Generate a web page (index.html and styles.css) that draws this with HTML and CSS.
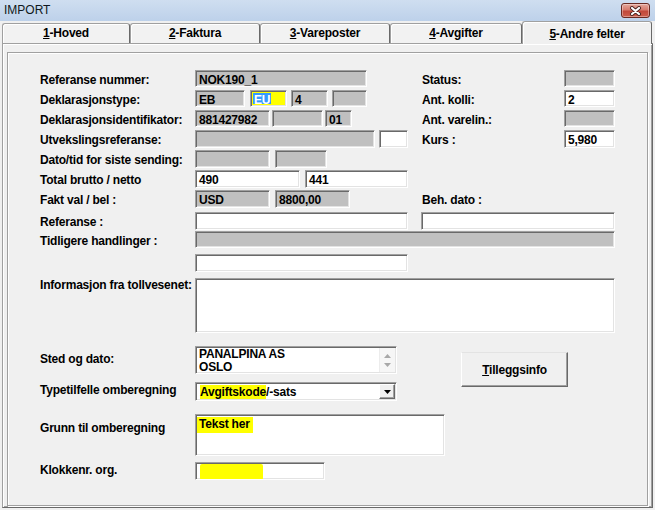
FILE: index.html
```html
<!DOCTYPE html>
<html>
<head>
<meta charset="utf-8">
<title>IMPORT</title>
<link rel="stylesheet" href="styles.css">
</head>
<body>
<div class="window">
  <div class="titlebar">
    <span class="title">IMPORT</span>
    <div class="close">
      <svg width="13" height="10" viewBox="0 0 13 10">
        <path d="M3 2 L10 8 M10 2 L3 8" stroke="#4a2420" stroke-width="4" stroke-linecap="round" fill="none"/>
        <path d="M3 2 L10 8 M10 2 L3 8" stroke="#ffffff" stroke-width="2.2" stroke-linecap="round" fill="none"/>
      </svg>
    </div>
  </div>

  <div class="tabs">
    <div class="tab t1"><u>1</u>-Hoved</div>
    <div class="tab"><u>2</u>-Faktura</div>
    <div class="tab"><u>3</u>-Vareposter</div>
    <div class="tab t4"><u>4</u>-Avgifter</div>
    <div class="tab active"><u>5</u>-Andre felter</div>
  </div>

  <div class="panel">
    <div class="group">
      <div class="form">
        <!-- row 1 -->
        <div class="lbl c1">Referanse nummer:</div>
        <div class="cell"><div class="f g h17 w172">NOK190_1</div></div>
        <div class="lbl c3">Status:</div>
        <div class="f g h17 w51 c4"></div>

        <!-- row 2 -->
        <div class="lbl c1">Deklarasjonstype:</div>
        <div class="cell">
          <div class="f g h17 w50">EB</div>
          <div class="f y h17 w37 ml5"><span class="sel">EU</span></div>
          <div class="f g h17 w37 ml4">4</div>
          <div class="f g h17 w35 ml4"></div>
        </div>
        <div class="lbl c3">Ant. kolli:</div>
        <div class="f h17 w51 c4">2</div>

        <!-- row 3 -->
        <div class="lbl c1">Deklarasjonsidentifikator:</div>
        <div class="cell">
          <div class="f g h17 w75">881427982</div>
          <div class="f g h17 w51 ml2"></div>
          <div class="f g h17 w27 ml2">01</div>
        </div>
        <div class="lbl c3">Ant. varelin.:</div>
        <div class="f g h17 w51 c4"></div>

        <!-- row 4 -->
        <div class="lbl c1">Utvekslingsreferanse:</div>
        <div class="cell">
          <div class="f g w180"></div>
          <div class="f w29 ml4"></div>
        </div>
        <div class="lbl c3">Kurs :</div>
        <div class="f w51 c4">5,980</div>

        <!-- row 5 -->
        <div class="lbl c1">Dato/tid for siste sending:</div>
        <div class="cell">
          <div class="f g w75"></div>
          <div class="f g w52 ml5"></div>
        </div>

        <!-- row 6 -->
        <div class="lbl c1">Total brutto / netto</div>
        <div class="cell">
          <div class="f w105">490</div>
          <div class="f w103 ml5">441</div>
        </div>

        <!-- row 7 -->
        <div class="lbl c1">Fakt val / bel :</div>
        <div class="cell">
          <div class="f g w75">USD</div>
          <div class="f g w75 ml5">8800,00</div>
        </div>
        <div class="lbl c3">Beh. dato :</div>

        <!-- row 8 -->
        <div class="lbl c1">Referanse :</div>
        <div class="cell"><div class="f w213"></div></div>
        <div class="f w194 span34 shiftl"></div>

        <!-- row 9 -->
        <div class="lbl c1">Tidligere handlinger :</div>
        <div class="f g h17 w420 span24"></div>

        <!-- row 10 -->
        <div class="f w213 c2"></div>

        <!-- row 11 -->
        <div class="lbl c1 lbl-top">Informasjon fra tollvesenet:</div>
        <div class="f w420 h55 span24"></div>

        <!-- row 12 -->
        <div class="lbl c1 mt3">Sted og dato:</div>
        <div class="f listbox">
          <div class="lines"><div class="line">PANALPINA AS</div><div class="line">OSLO</div></div>
          <div class="sb">
            <svg width="7" height="4" viewBox="0 0 7 4"><path d="M3.5 0 L7 4 H0 Z" fill="#a8a8a8"/></svg>
            <svg width="7" height="4" viewBox="0 0 7 4"><path d="M0 0 H7 L3.5 4 Z" fill="#a8a8a8"/></svg>
          </div>
        </div>
        <div class="btn"><span><u>T</u>illeggsinfo</span></div>

        <!-- row 13 -->
        <div class="lbl c1 mtm2">Typetilfelle omberegning</div>
        <div class="f combo">
          <div class="ctext"><span class="hl">Avgiftskode</span>/-sats</div>
          <div class="dd">
            <svg width="7" height="4" viewBox="0 0 7 4"><path d="M0 0 H7 L3.5 4 Z" fill="#000"/></svg>
          </div>
        </div>

        <!-- row 14 -->
        <div class="lbl c1 mt4">Grunn til omberegning</div>
        <div class="f memo w250 span24"><span class="hl2">Tekst her</span></div>

        <!-- row 15 -->
        <div class="lbl c1 mtm2">Klokkenr. org.</div>
        <div class="f w130 blobfield c2"><div class="blob"></div></div>
      </div>
    </div>
  </div>
</div>
</body>
</html>
```

FILE: styles.css
```css
* {
  box-sizing: border-box;
}

html,
body {
  margin: 0;
  padding: 0;
}

body {
  width: 655px;
  height: 510px;
  overflow: hidden;
  background: #f0f0f0;
  font-family: "Liberation Sans", Arial, sans-serif;
  font-size: 12px;
  color: #000;
}

.window {
  display: flex;
  flex-direction: column;
  width: 655px;
  height: 510px;
}

/* title bar */
.titlebar {
  height: 21px;
  flex: none;
  display: flex;
  justify-content: space-between;
  align-items: flex-start;
  padding-left: 4px;
  background: linear-gradient(#cfdef0, #bdd1ea);
}

.title {
  line-height: 21px;
  color: #101820;
}

.close {
  width: 29px;
  height: 15px;
  margin: 3px 5px 0 0;
  border: 1px solid #6a2a22;
  border-radius: 3px;
  background: linear-gradient(#e4a89c 0%, #d67a6c 45%, #c1483a 55%, #cc5e4c 100%);
  box-shadow: inset 0 0 0 1px rgba(255, 255, 255, 0.35);
  display: flex;
  align-items: center;
  justify-content: center;
}

/* tabs */
.tabs {
  height: 22px;
  flex: none;
  display: flex;
  align-items: flex-end;
  padding-left: 2px;
}

.tab {
  width: 130px;
  height: 20px;
  border: 1px solid #a0a0a0;
  border-bottom: none;
  border-right-color: #696969;
  border-radius: 3px 3px 0 0;
  background: #f2f2f2;
  box-shadow: inset 1px 1px 0 #ffffff;
  font-weight: bold;
  letter-spacing: -0.2px;
  line-height: 18px;
  text-align: center;
  white-space: nowrap;
}

.tab.t1 {
  width: 128px;
}

.tab.t4 {
  width: 132px;
}

.tab.active {
  height: 23px;
  margin-bottom: -1px;
  padding-top: 3px;
  background: #f0f0f0;
  position: relative;
  z-index: 1;
}

/* panel + group box */
.panel {
  width: 651px;
  height: 465px;
  margin-left: 2px;
  flex: none;
  border: 1px solid #a0a0a0;
  border-right-color: #696969;
  border-bottom-color: #696969;
  box-shadow: inset 1px 1px 0 #ffffff, inset -1px -1px 0 #a0a0a0;
  padding: 8px 0 0 4px;
}

.group {
  width: 641px;
  height: 454px;
  border: 1px solid #a0a0a0;
  box-shadow: inset 1px 1px 0 #ffffff, 1px 1px 0 #ffffff;
  padding: 17px 0 0 32px;
}

.form {
  display: grid;
  grid-template-columns: 155px 227px 142px 51px;
  grid-template-rows: 20px 20px 20px 20px 20px 20px 22px 19px 23px 24px 68px 36px 32px 48px 18px;
  align-items: start;
}

.c1 { grid-column: 1; }
.c2 { grid-column: 2; }
.c3 { grid-column: 3; }
.c4 { grid-column: 4; }
.span24 { grid-column: 2 / 5; }
.span34 { grid-column: 3 / 5; }
.shiftl { margin-left: -1px; }

.lbl {
  font-weight: bold;
  letter-spacing: -0.2px;
  line-height: 18px;
  padding-top: 1px;
  white-space: nowrap;
}

.lbl-top { margin-top: -3px; }
.mt3 { margin-top: 3px; }
.mt4 { margin-top: 4px; }
.mtm2 { margin-top: -2px; }

.cell {
  display: flex;
}

/* fields */
.f {
  height: 18px;
  flex: none;
  border: 1px solid;
  border-color: #a0a0a0 #ffffff #ffffff #a0a0a0;
  box-shadow: inset 1px 1px 0 #696969, inset -1px -1px 0 #e3e3e3;
  background: #ffffff;
  font-weight: bold;
  letter-spacing: -0.2px;
  line-height: 14px;
  padding: 2px 0 0 3px;
  white-space: nowrap;
  overflow: hidden;
}

.f.g { background: #c0c0c0; }
.f.y { background: #ffff00; }
.h17 { height: 17px; }
.h55 { height: 55px; }

.w27 { width: 27px; }
.w29 { width: 29px; }
.w35 { width: 35px; }
.w37 { width: 37px; }
.w50 { width: 50px; }
.w51 { width: 51px; }
.w52 { width: 52px; }
.w75 { width: 75px; }
.w103 { width: 103px; }
.w105 { width: 105px; }
.w130 { width: 130px; }
.w172 { width: 172px; }
.w180 { width: 180px; }
.w194 { width: 194px; }
.w213 { width: 213px; }
.w250 { width: 250px; }
.w420 { width: 420px; }

.ml2 { margin-left: 2px; }
.ml4 { margin-left: 4px; }
.ml5 { margin-left: 5px; }

.sel {
  display: inline-block;
  height: 11px;
  line-height: 14px;
  vertical-align: top;
  margin-left: -1px;
  padding: 0 1px;
  background: #3399ff;
  color: #ffffff;
}

/* list box */
.listbox {
  width: 202px;
  height: 28px;
  display: flex;
  padding: 0;
}

.lines {
  flex: 1;
  padding: 1px 0 0 3px;
  display: flex;
  flex-direction: column;
}

.line {
  height: 12.5px;
  line-height: 13px;
  overflow: visible;
}

.sb {
  width: 16px;
  margin: 1px 1px 1px 0;
  background: #f6f6f6;
  border-left: 1px solid #ececec;
  display: flex;
  flex-direction: column;
  align-items: center;
  justify-content: space-between;
  padding: 6px 0 5px;
}

.sb svg {
  display: block;
}

/* combo box */
.combo {
  width: 202px;
  height: 19px;
  display: flex;
  padding: 0;
}

.ctext {
  flex: 1;
  padding: 2px 0 0 4px;
  line-height: 14px;
}

.hl {
  background: #ffff00;
}

.dd {
  width: 16px;
  height: 15px;
  margin: 1px 1px 0 0;
  background: #f0f0f0;
  border: 1px solid;
  border-color: #ffffff #696969 #696969 #ffffff;
  box-shadow: inset -1px -1px 0 #a0a0a0;
  display: flex;
  align-items: center;
  justify-content: center;
}

.dd svg {
  display: block;
}

/* button */
.btn {
  grid-column: 3 / 5;
  grid-row: span 2;
  width: 107px;
  height: 35px;
  margin: 6px 0 0 39px;
  border: 1px solid;
  border-color: #e3e3e3 #696969 #696969 #ffffff;
  box-shadow: inset -1px -1px 0 #a0a0a0;
  background: #f0f0f0;
  display: flex;
  align-items: center;
  justify-content: center;
  font-weight: bold;
  letter-spacing: -0.2px;
  padding-top: 1px;
}

/* memo */
.memo {
  height: 42px;
  padding: 2px 0 0 1px;
}

.hl2 {
  background: #ffff00;
  padding: 0 3px 2px 2px;
}

.blobfield {
  padding: 0;
}

.blob {
  width: 63px;
  height: 16px;
  margin: 1px 0 0 4px;
  background: #ffff00;
  border-radius: 2px;
}
```
